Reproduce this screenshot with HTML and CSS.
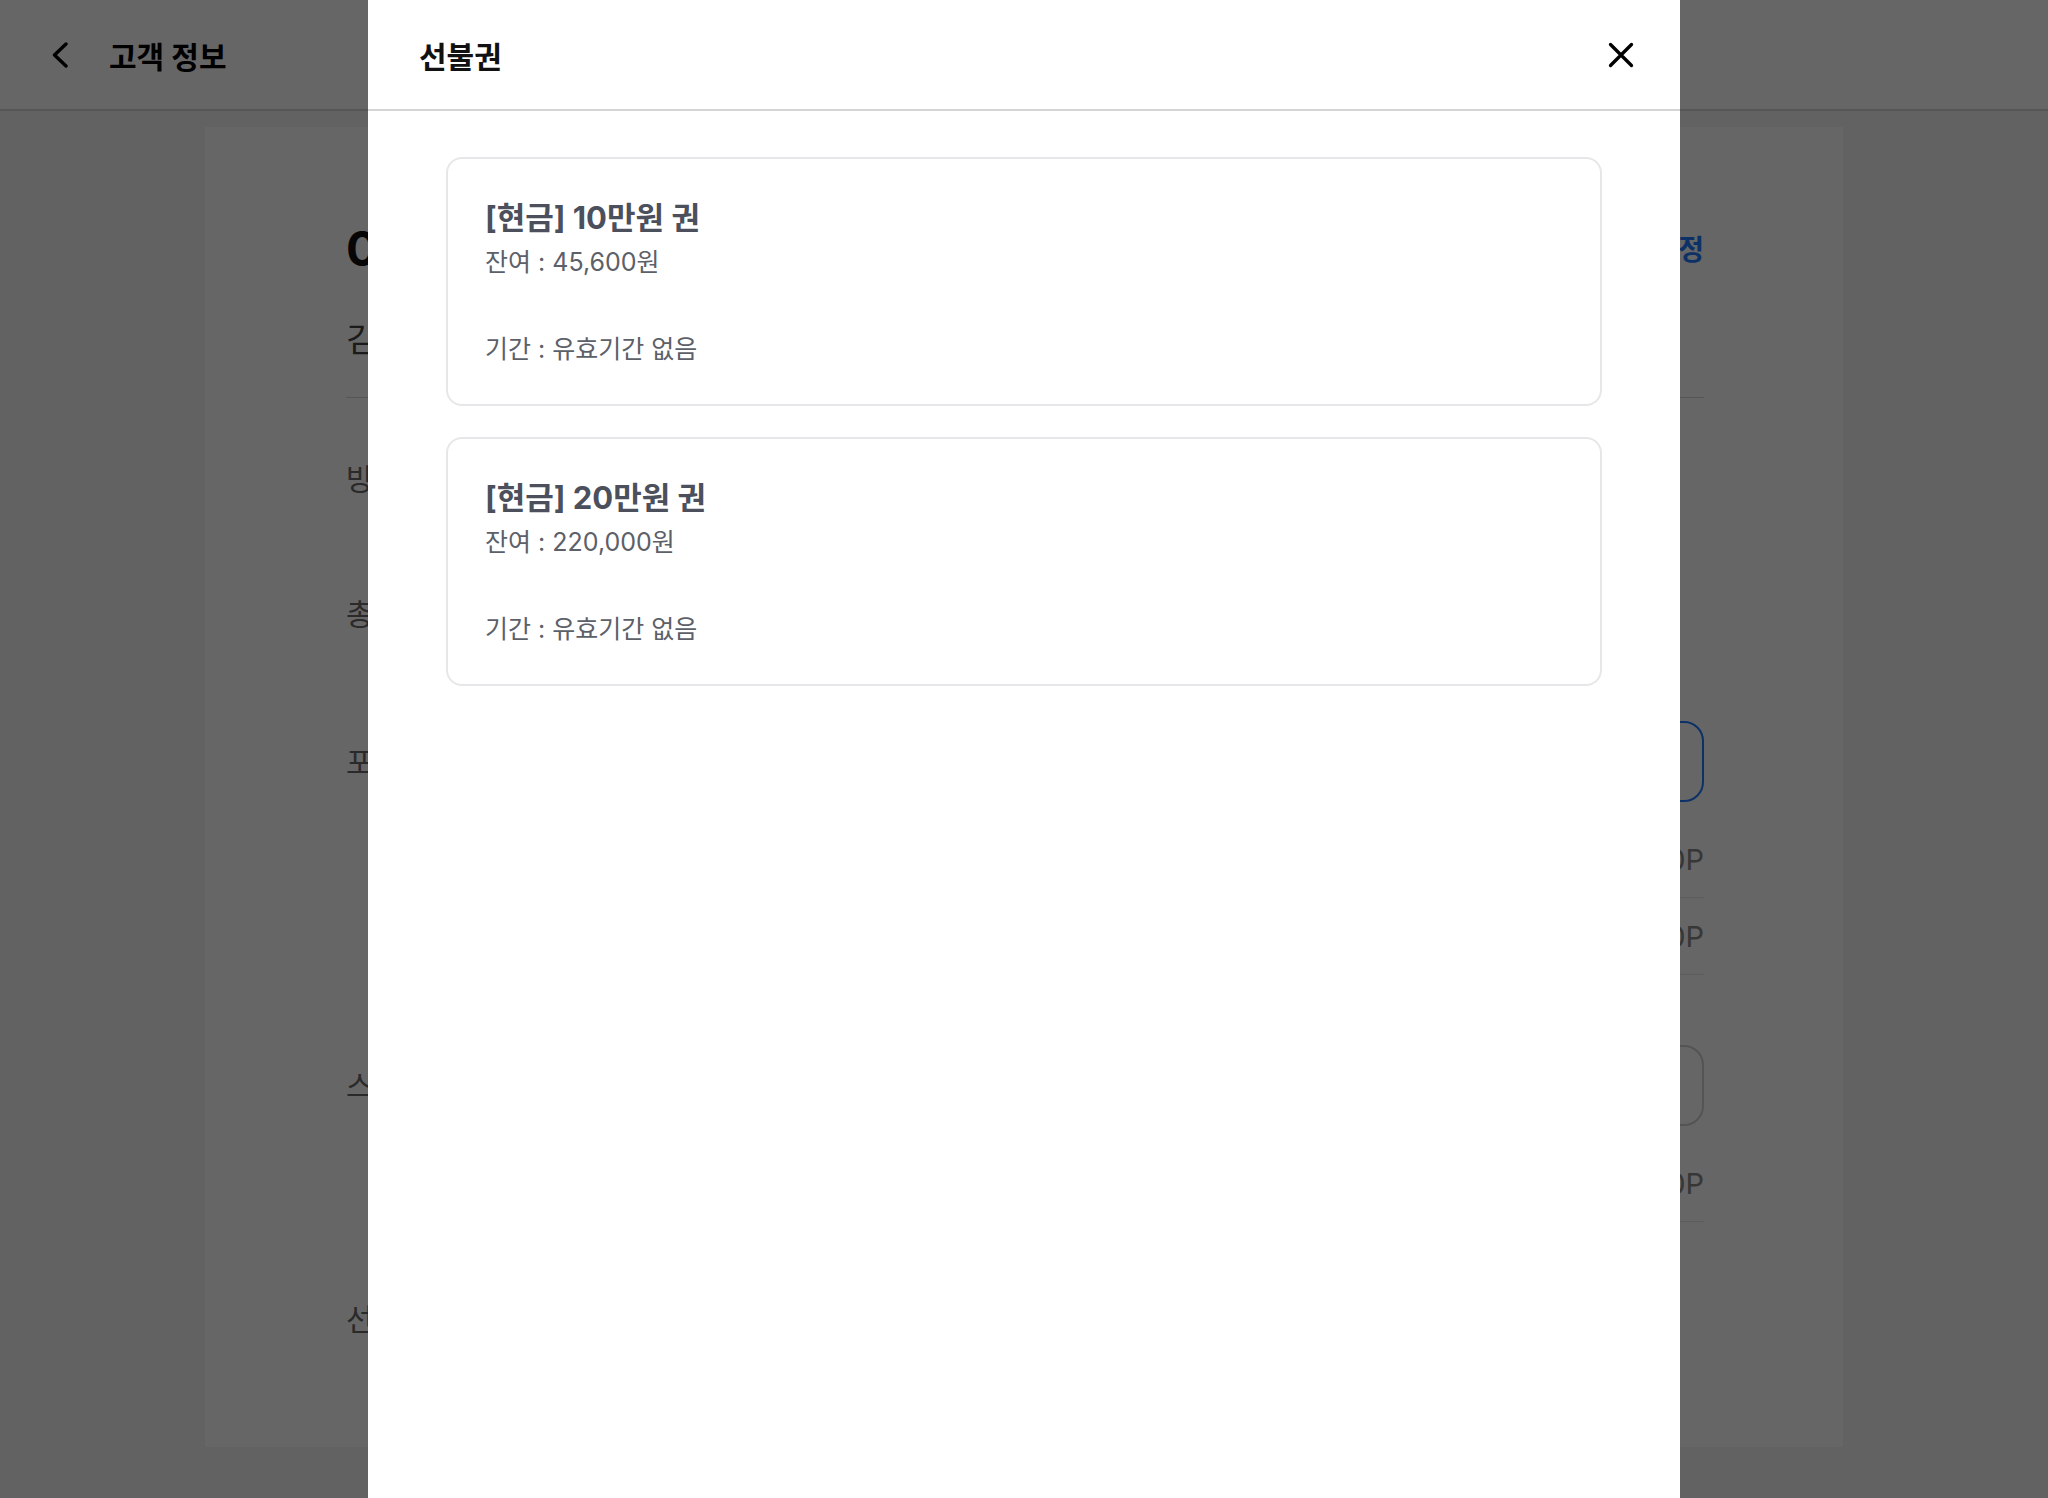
FILE: index.html
```html
<!DOCTYPE html>
<html lang="ko">
<head>
<meta charset="utf-8">
<title>고객 정보</title>
<link rel="stylesheet" href="styles.css">
</head>
<body>
<div class="page">
  <header class="topbar">
    <button class="back" aria-label="뒤로">
      <svg width="16" height="26" viewBox="0 0 16 26"><path d="M14 2 L2.5 13 L14 24" fill="none" stroke="#000" stroke-width="3.4" stroke-linecap="round" stroke-linejoin="round"/></svg>
    </button>
    <h1 class="topbar-title">고객 정보</h1>
  </header>
  <main class="content">
    <section class="customer-card">
      <div class="profile">
        <div class="profile-head">
          <span class="phone">010-2345-6789</span>
          <a class="edit">수정</a>
        </div>
        <div class="name">김민지 고객님</div>
      </div>

      <div class="row r-visit"><span class="label">방문 횟수</span><span class="value">12회</span></div>
      <div class="row r-total"><span class="label">총 결제 금액</span><span class="value">1,250,000원</span></div>

      <div class="row r-point">
        <span class="label">포인트</span>
        <div class="box box-active">포인트 적립 / 사용</div>
      </div>
      <ul class="list">
        <li class="item"><span>적립 포인트</span><span class="amount">0P</span></li>
        <li class="item"><span>사용 가능 포인트</span><span class="amount">0P</span></li>
      </ul>

      <div class="row r-stamp">
        <span class="label">스탬프</span>
        <div class="box">스탬프 적립</div>
      </div>
      <ul class="list">
        <li class="item"><span>보유 스탬프</span><span class="amount">0P</span></li>
      </ul>

      <div class="row r-prepaid"><span class="label">선불권</span><span class="value">2개</span></div>
    </section>
  </main>
</div>

<div class="overlay"></div>

<div class="modal" role="dialog" aria-label="선불권">
  <div class="modal-header">
    <h2 class="modal-title">선불권</h2>
    <button class="close" aria-label="닫기">
      <svg width="28" height="28" viewBox="0 0 28 28"><path d="M3.5 3.5 L24.5 24.5 M24.5 3.5 L3.5 24.5" fill="none" stroke="#000" stroke-width="3.3" stroke-linecap="round"/></svg>
    </button>
  </div>
  <div class="modal-body">
    <div class="ticket">
      <div class="ticket-title">[현금] 10만원 권</div>
      <div class="ticket-balance">잔여 : 45,600원</div>
      <div class="ticket-period">기간 : 유효기간 없음</div>
    </div>
    <div class="ticket">
      <div class="ticket-title">[현금] 20만원 권</div>
      <div class="ticket-balance">잔여 : 220,000원</div>
      <div class="ticket-period">기간 : 유효기간 없음</div>
    </div>
  </div>
</div>
</body>
</html>
```

FILE: styles.css
```css
* { box-sizing: border-box; }

html, body {
  margin: 0;
  padding: 0;
}

body {
  background: #f5f5f5;
  font-family: Inter, "Noto Sans CJK KR", "Noto Sans", sans-serif;
  color: #111;
  height: 1498px;
  overflow: hidden;
}

button {
  border: 0;
  background: none;
  padding: 0;
  margin: 0;
  cursor: pointer;
  display: flex;
}

/* ---------- background page ---------- */
.topbar {
  height: 111px;
  background: #fff;
  border-bottom: 2px solid #d6d6d6;
  display: flex;
  align-items: center;
  padding-left: 52px;
  gap: 41px;
}

.topbar-title {
  margin: 0;
  font-size: 30px;
  font-weight: 700;
  color: #000;
}

.content {
  padding-top: 16px;
}

.customer-card {
  width: 1638px;
  min-height: 1320px;
  margin: 0 auto;
  background: #fff;
  padding: 90px 139px 0 141px;
}

.profile {
  padding-bottom: 33px;
  border-bottom: 1px solid #d6d6d6;
}

.profile-head {
  display: flex;
  justify-content: space-between;
  align-items: center;
  height: 62px;
}

.phone {
  font-size: 48px;
  font-weight: 700;
  color: #111;
}

.edit {
  font-size: 28px;
  font-weight: 700;
  color: #1f7cff;
}

.name {
  margin-top: 37px;
  font-size: 34px;
  line-height: 48px;
  color: #444;
}

.row {
  display: flex;
  align-items: center;
  justify-content: space-between;
}

.label {
  font-size: 30px;
  line-height: 42px;
  color: #6a6a6a;
  width: 260px;
  flex: none;
}

.value {
  font-size: 30px;
  line-height: 42px;
  color: #333;
  margin-right: 420px;
}

.r-visit { margin-top: 60px; }
.r-total { margin-top: 93px; }
.r-point { margin-top: 86px; }
.r-stamp { margin-top: 70px; }
.r-prepaid { margin-top: 76px; }

.box {
  flex: 1;
  height: 81px;
  border: 2px solid #d2d2d2;
  border-radius: 20px;
  display: flex;
  align-items: center;
  justify-content: center;
  font-size: 28px;
  color: #555;
}

.box-active {
  border-color: #1f7cff;
  color: #1f7cff;
}

.list {
  list-style: none;
  margin: 19px 0 0 260px;
  padding: 0;
}

.item {
  height: 77px;
  border-bottom: 1px solid #e6e6e6;
  display: flex;
  justify-content: space-between;
  align-items: center;
  font-size: 28px;
  color: #888;
}

.amount {
  color: #8a8a8a;
  font-size: 29px;
}

/* ---------- dim + modal ---------- */
.overlay {
  position: fixed;
  inset: 0;
  background: rgba(0, 0, 0, 0.6);
  z-index: 10;
}

.modal {
  position: fixed;
  top: 0;
  bottom: 0;
  left: 368px;
  width: 1312px;
  background: #fff;
  z-index: 11;
  display: flex;
  flex-direction: column;
}

.modal-header {
  height: 111px;
  flex: none;
  border-bottom: 2px solid #d4d4d4;
  display: flex;
  align-items: center;
  justify-content: space-between;
  padding: 0 45px 0 51px;
}

.modal-title {
  margin: 0;
  font-size: 30px;
  font-weight: 700;
  color: #111;
}

.modal-body {
  padding: 46px 78px;
  display: flex;
  flex-direction: column;
  gap: 31px;
}

.ticket {
  border: 2px solid #e7e7ea;
  border-radius: 16px;
  padding: 37px 40px 33px 37px;
}

.ticket-title {
  font-size: 31px;
  line-height: 44px;
  font-weight: 700;
  color: #4b505c;
}

.ticket-balance {
  font-size: 25px;
  line-height: 44px;
  color: #5c6068;
}

.ticket-period {
  margin-top: 43px;
  font-size: 25px;
  line-height: 44px;
  color: #5c6068;
}
```
